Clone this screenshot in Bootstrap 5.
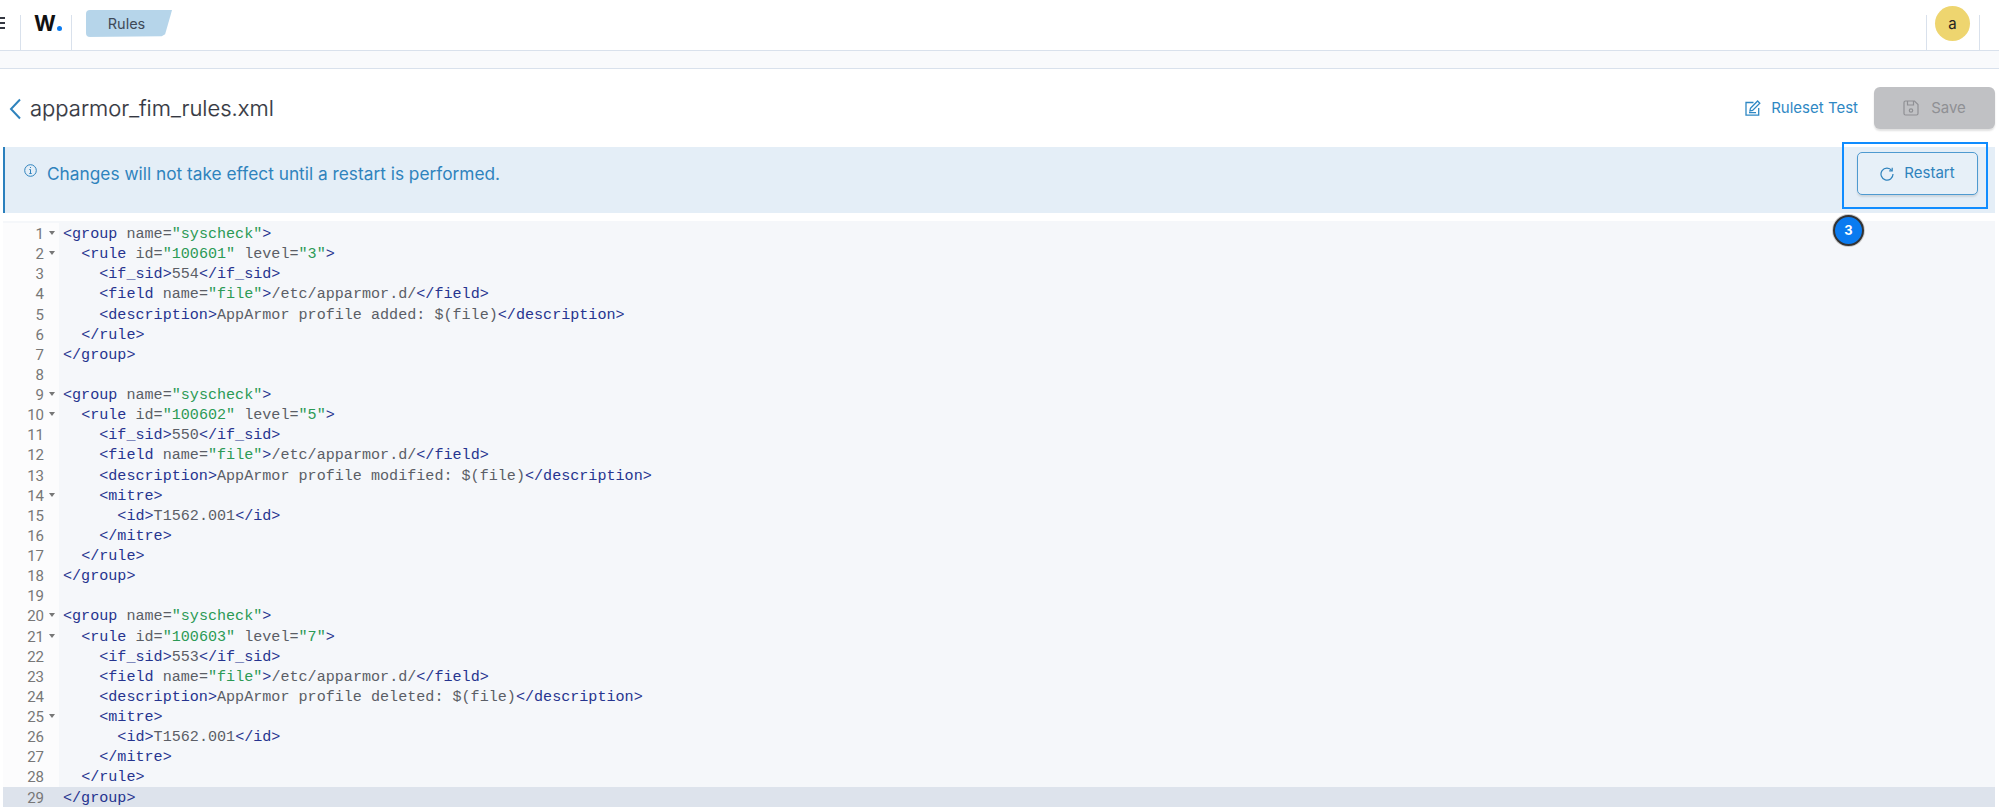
<!DOCTYPE html>
<html lang="en">
<head>
<meta charset="utf-8">
<title>Rules</title>
<link rel="stylesheet" href="https://cdn.jsdelivr.net/npm/bootstrap@5.3.0/dist/css/bootstrap.min.css">
<style>
html,body{height:807px;overflow:hidden;background:#fff;font-family:Inter,"Liberation Sans",sans-serif}
.topbar{height:51px;border-bottom:1px solid #d9e1ec;position:relative}
.menu-dots{width:5px;margin-right:15px;padding-top:17px;gap:3px}
.menu-dots span{height:2px;background:#343741;display:block}
.tb-cell{height:35px;margin-top:15px;border-left:1px solid #d9e1ec}
.logo-cell{width:51px;padding-left:13px;font:700 21px/17px Inter,sans-serif;color:#111;letter-spacing:-.5px}
.logo-cell em{display:inline-block;width:5px;height:5px;border-radius:50%;background:#0a7bf0;margin-left:2px}
.crumb{width:86px;height:27px;margin:-5px 0 0 14px;background:#b6d5ea;color:#3f4a58;font-size:14.500px;line-height:27px;text-align:center;padding-right:5px;border-radius:4px 0 4px 4px;clip-path:polygon(0 0,100% 0,99% 12%,92% 90%,88% 97%,0 100%)}
.user-cell{width:53px;margin-left:auto}
.avatar{width:35px;height:35px;border-radius:50%;background:#eed56f;color:#222;font-size:15px;line-height:35px;text-align:center;margin:-9px 0 0 8px}
.tail-cell{width:20px}
.subband{height:18px;background:#f9fafc;border-bottom:1px solid #d9e1ec}
.head-row{height:78px;padding:18px 4px 0 9px}
.back-arrow{width:13px;height:22px;margin-right:8px;margin-top:11px}
.file-title{font-size:22px;font-weight:300;color:#343741;margin:0;line-height:42px;-webkit-text-stroke:.2px #343741}
.rule-link{color:#2f88c4;font-size:15px;font-weight:400;text-decoration:none;height:42px}
.rule-link svg{margin-right:10px}
.btn-save{width:121px;height:42px;background:#c0c1c4;border:0;color:#8f9094;font-size:15px;font-weight:400;box-shadow:0 2px 2px rgba(0,0,0,.12)}
.btn-save:disabled{background:#c0c1c4;color:#8f9094;opacity:1}
.info-box{height:66px;margin:0 4px 8px 3px;background:#e4eef7;border-left:2px solid #2b80bd;padding:0 17px 0 19px;position:relative}
.info-text{color:#2f83bd;font-size:17.300px;line-height:24px;padding-top:15px}
.info-text svg{margin:-10px 10px 0 0}
.btn-restart{width:121px;height:43px;margin-top:5px;background:#e7f0f8;border:1px solid #4e9ad0;color:#2f83bd;font-size:15px;font-weight:400;box-shadow:0 2px 2px rgba(0,0,0,.1);border-radius:5px}
.btn-restart svg{margin-right:10px}
.hl-box{position:absolute;right:7px;top:-5px;width:146px;height:67px;border:2px solid #0f8cff;pointer-events:none}
.step-badge{position:absolute;right:131px;top:68px;width:31px;height:31px;border-radius:50%;background:#0a7bf0;color:#fff;border:2px solid #333;box-shadow:0 0 0 1px #ccc;font-size:13px;font-weight:700;line-height:27px;text-align:center}
.editor{margin:0 4px 0 3px;background:#f5f7fa;padding-top:2px;height:586px;font-family:"Liberation Mono","DejaVu Sans Mono",monospace;font-size:15.100px;color:#5b5e66;overflow:hidden}
.cm-row{height:20.140px;line-height:23px;display:flex;white-space:pre}
.cm-num{width:56px;flex:none;background:#fcfcfd;color:#777;position:relative;padding-right:15px;text-align:right;font-family:Roboto,sans-serif;font-size:15px}
.cm-num.fold::after{content:"";position:absolute;left:46px;top:8px;border:3.500px solid transparent;border-top:4px solid #777;border-bottom:0}
.cm-code{padding-left:4px;flex:1}
.xt{color:#26348f}
.xs{color:#2b9a55}
.cm-active,.cm-active .cm-num{background:#dde3ec}
</style>
</head>
<body>
<header class="topbar d-flex">
  <div class="menu-dots d-flex flex-column"><span></span><span></span><span></span></div>
  <div class="tb-cell logo-cell">W<em></em></div>
  <div class="tb-cell"><div class="crumb">Rules</div></div>
  <div class="tb-cell user-cell"><div class="avatar">a</div></div>
  <div class="tb-cell tail-cell"></div>
</header>
<div class="subband"></div>
<section class="head-row d-flex align-items-start">
  <svg class="back-arrow" viewBox="0 0 13 22" fill="none" stroke="#2f83bd" stroke-width="2"><path d="M11 1.500 2 11l9 9.500"/></svg>
  <h1 class="file-title">apparmor_fim_rules.xml</h1>
  <a class="rule-link ms-auto d-flex align-items-center me-3" href="#">
    <svg width="16" height="16" viewBox="0 0 16 16" fill="none" stroke="#2f88c4" stroke-width="1.300"><path d="M8.500 2.500H1v12.700h12.700V8"/><path d="M5.500 8.200 12.600 1l2.200 2.200-7.200 7.200-2.700.5zM4 12.700h7"/></svg>Ruleset Test
  </a>
  <button class="btn btn-save d-flex align-items-center justify-content-center" disabled>
    <svg width="16" height="16" viewBox="0 0 16 16" fill="none" stroke="#8f9094" stroke-width="1.200" class="me-2"><path d="M1 2.500A1.500 1.500 0 0 1 2.500 1h9L15 4.500v9a1.500 1.500 0 0 1-1.500 1.500h-11A1.500 1.500 0 0 1 1 13.500z"/><path d="M4.500 1v4h6V1"/><circle cx="8" cy="10.500" r="1.700"/></svg><span class="ms-1">Save</span>
  </button>
</section>
<section class="info-box d-flex justify-content-between align-items-start">
  <div class="info-text">
    <svg width="13" height="13" viewBox="0 0 13 13" fill="none" stroke="#2f83bd"><circle cx="6.500" cy="6.500" r="5.800"/><path d="M6.500 5.500v4M5.300 9.500h2.400M5.300 5.500h1.200M6.500 3v1" stroke-width="1"/></svg>Changes will not take effect until a restart is performed.
  </div>
  <button class="btn btn-restart d-flex align-items-center justify-content-center">
    <svg width="14" height="14" viewBox="0 0 14 14" fill="none" stroke="#2f83bd" stroke-width="1.200"><path d="M11.800 3.500A6 6 0 1 0 13 7"/><path d="M12.200 .8v3h-3"/></svg>Restart
  </button>
  <div class="hl-box"></div>
  <div class="step-badge">3</div>
</section>
<main class="editor">
<div class="cm-row"><div class="cm-num fold">1</div><div class="cm-code"><span class="xt">&lt;group</span> name=<span class="xs">"syscheck"</span><span class="xt">&gt;</span></div></div>
<div class="cm-row"><div class="cm-num fold">2</div><div class="cm-code">  <span class="xt">&lt;rule</span> id=<span class="xs">"100601"</span> level=<span class="xs">"3"</span><span class="xt">&gt;</span></div></div>
<div class="cm-row"><div class="cm-num">3</div><div class="cm-code">    <span class="xt">&lt;if_sid&gt;</span>554<span class="xt">&lt;/if_sid&gt;</span></div></div>
<div class="cm-row"><div class="cm-num">4</div><div class="cm-code">    <span class="xt">&lt;field</span> name=<span class="xs">"file"</span><span class="xt">&gt;</span>/etc/apparmor.d/<span class="xt">&lt;/field&gt;</span></div></div>
<div class="cm-row"><div class="cm-num">5</div><div class="cm-code">    <span class="xt">&lt;description&gt;</span>AppArmor profile added: $(file)<span class="xt">&lt;/description&gt;</span></div></div>
<div class="cm-row"><div class="cm-num">6</div><div class="cm-code">  <span class="xt">&lt;/rule&gt;</span></div></div>
<div class="cm-row"><div class="cm-num">7</div><div class="cm-code"><span class="xt">&lt;/group&gt;</span></div></div>
<div class="cm-row"><div class="cm-num">8</div><div class="cm-code"></div></div>
<div class="cm-row"><div class="cm-num fold">9</div><div class="cm-code"><span class="xt">&lt;group</span> name=<span class="xs">"syscheck"</span><span class="xt">&gt;</span></div></div>
<div class="cm-row"><div class="cm-num fold">10</div><div class="cm-code">  <span class="xt">&lt;rule</span> id=<span class="xs">"100602"</span> level=<span class="xs">"5"</span><span class="xt">&gt;</span></div></div>
<div class="cm-row"><div class="cm-num">11</div><div class="cm-code">    <span class="xt">&lt;if_sid&gt;</span>550<span class="xt">&lt;/if_sid&gt;</span></div></div>
<div class="cm-row"><div class="cm-num">12</div><div class="cm-code">    <span class="xt">&lt;field</span> name=<span class="xs">"file"</span><span class="xt">&gt;</span>/etc/apparmor.d/<span class="xt">&lt;/field&gt;</span></div></div>
<div class="cm-row"><div class="cm-num">13</div><div class="cm-code">    <span class="xt">&lt;description&gt;</span>AppArmor profile modified: $(file)<span class="xt">&lt;/description&gt;</span></div></div>
<div class="cm-row"><div class="cm-num fold">14</div><div class="cm-code">    <span class="xt">&lt;mitre&gt;</span></div></div>
<div class="cm-row"><div class="cm-num">15</div><div class="cm-code">      <span class="xt">&lt;id&gt;</span>T1562.001<span class="xt">&lt;/id&gt;</span></div></div>
<div class="cm-row"><div class="cm-num">16</div><div class="cm-code">    <span class="xt">&lt;/mitre&gt;</span></div></div>
<div class="cm-row"><div class="cm-num">17</div><div class="cm-code">  <span class="xt">&lt;/rule&gt;</span></div></div>
<div class="cm-row"><div class="cm-num">18</div><div class="cm-code"><span class="xt">&lt;/group&gt;</span></div></div>
<div class="cm-row"><div class="cm-num">19</div><div class="cm-code"></div></div>
<div class="cm-row"><div class="cm-num fold">20</div><div class="cm-code"><span class="xt">&lt;group</span> name=<span class="xs">"syscheck"</span><span class="xt">&gt;</span></div></div>
<div class="cm-row"><div class="cm-num fold">21</div><div class="cm-code">  <span class="xt">&lt;rule</span> id=<span class="xs">"100603"</span> level=<span class="xs">"7"</span><span class="xt">&gt;</span></div></div>
<div class="cm-row"><div class="cm-num">22</div><div class="cm-code">    <span class="xt">&lt;if_sid&gt;</span>553<span class="xt">&lt;/if_sid&gt;</span></div></div>
<div class="cm-row"><div class="cm-num">23</div><div class="cm-code">    <span class="xt">&lt;field</span> name=<span class="xs">"file"</span><span class="xt">&gt;</span>/etc/apparmor.d/<span class="xt">&lt;/field&gt;</span></div></div>
<div class="cm-row"><div class="cm-num">24</div><div class="cm-code">    <span class="xt">&lt;description&gt;</span>AppArmor profile deleted: $(file)<span class="xt">&lt;/description&gt;</span></div></div>
<div class="cm-row"><div class="cm-num fold">25</div><div class="cm-code">    <span class="xt">&lt;mitre&gt;</span></div></div>
<div class="cm-row"><div class="cm-num">26</div><div class="cm-code">      <span class="xt">&lt;id&gt;</span>T1562.001<span class="xt">&lt;/id&gt;</span></div></div>
<div class="cm-row"><div class="cm-num">27</div><div class="cm-code">    <span class="xt">&lt;/mitre&gt;</span></div></div>
<div class="cm-row"><div class="cm-num">28</div><div class="cm-code">  <span class="xt">&lt;/rule&gt;</span></div></div>
<div class="cm-row cm-active"><div class="cm-num">29</div><div class="cm-code"><span class="xt">&lt;/group&gt;</span></div></div>
</main>
<script src="https://cdn.jsdelivr.net/npm/bootstrap@5.3.0/dist/js/bootstrap.bundle.min.js"></script>
</body>
</html>
